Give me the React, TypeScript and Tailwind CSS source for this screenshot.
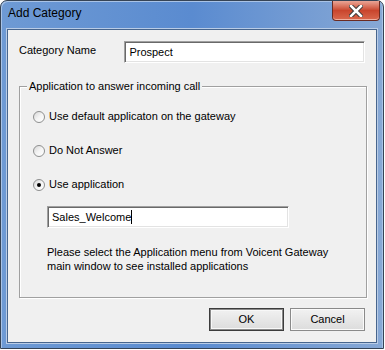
const font = "font-['Liberation_Sans',Arial,sans-serif]";

function Radio({ checked, label }: { checked?: boolean; label: string }) {
  return (
    <div className="flex h-[13px] items-center">
      <span className="flex h-[12px] w-[12px] items-center justify-center rounded-full border border-[#8e8f8f] bg-gradient-to-br from-[#d6d6d6] via-[#f4f4f4] to-white">
        {checked && <span className="h-[4px] w-[4px] rounded-full bg-black" />}
      </span>
      <span className="ml-[4px] text-[11px] leading-[13px] text-black">{label}</span>
    </div>
  );
}

function TextBox({ value, caret, className }: { value: string; caret?: boolean; className: string }) {
  return (
    <div
      className={`flex h-[22px] items-center border border-t-[#a0a0a0] border-l-[#a0a0a0] border-r-white border-b-white bg-white pl-[4px] shadow-[inset_1px_1px_0_#696969,inset_-1px_-1px_0_#e3e3e3] ${className}`}
    >
      <span className="text-[11px] leading-[13px] text-black">{value}</span>
      {caret && <span className="h-[14px] w-px bg-black" />}
    </div>
  );
}

export default function App() {
  return (
    <div className={`h-[350px] w-[385px] bg-white ${font}`}>
      <div className="flex h-[349px] w-[384px] flex-col rounded-t-[7px] border border-[#364456] bg-gradient-to-r from-[#6e9ad4] via-[#5a8bd0] to-[#87a8d5] shadow-[inset_1px_1px_0_#a9c3e6,inset_-1px_0_0_#a9c3e6]">
        <div className="flex h-[28px] items-start justify-between">
          <span className="pt-[5px] pl-[7px] text-[12px] leading-[15px] text-black">Add Category</span>
          <div className="mr-[3px] flex h-[20px] w-[48px] items-center justify-center rounded-b-[4px] border border-t-0 border-[#6b2b22] bg-gradient-to-b from-[#e9a596] via-[#c9452d] to-[#d9684d] shadow-[inset_0_-1px_0_#f0b0a0]">
            <svg width="14" height="12" viewBox="0 0 14 12">
              <path d="M2 1 L12 11 M12 1 L2 11" stroke="#3a3a3a" strokeWidth="4.5" strokeLinecap="square" />
              <path d="M2 1 L12 11 M12 1 L2 11" stroke="#ffffff" strokeWidth="2.5" strokeLinecap="square" />
            </svg>
          </div>
        </div>
        <div className="mx-[6px] flex h-[314px] flex-col border border-[#47658d] bg-[#f0f0f0] px-[11px] pt-[11px] shadow-[0_0_0_1px_#b9cce6]">
          <div className="flex h-[22px]">
            <span className="w-[106px] pt-[3px] text-[11px] leading-[13px] text-black">Category Name</span>
            <TextBox value="Prospect" className="w-[242px]" />
          </div>
          <div className="relative mt-[23px] h-[212px] w-[348px] border border-[#a0a0a0] shadow-[inset_1px_1px_0_white,1px_1px_0_white]">
            <span className="absolute -top-[7px] left-[7px] bg-[#f0f0f0] px-[2px] text-[11px] leading-[13px] text-black">
              Application to answer incoming call
            </span>
            <div className="flex flex-col gap-[21px] pt-[23px] pl-[13px]">
              <Radio label="Use default applicaton on the gateway" />
              <Radio label="Do Not Answer" />
              <Radio checked label="Use application" />
            </div>
            <TextBox value="Sales_Welcome" caret className="mt-[15px] ml-[27px] w-[242px]" />
            <p className="mt-[17px] ml-[27px] h-[27px] overflow-hidden text-[11px] leading-[14px] text-black">
              Please select the Application menu from Voicent Gateway
              <br />
              main window to see installed applications
            </p>
          </div>
          <div className="mt-[10px] flex justify-end gap-[6px]">
            <button className="h-[23px] w-[75px] border border-[#3c3c3c] bg-gradient-to-b from-[#f2f2f2] to-[#dcdcdc] text-[11px] text-black shadow-[inset_0_0_0_1px_#8a8a8a,inset_0_0_0_2px_#f8f8f8]">
              OK
            </button>
            <button className="h-[23px] w-[75px] border border-[#8a8a8a] bg-gradient-to-b from-[#f2f2f2] to-[#dcdcdc] text-[11px] text-black shadow-[inset_0_0_0_1px_#fafafa]">
              Cancel
            </button>
          </div>
        </div>
      </div>
    </div>
  );
}
